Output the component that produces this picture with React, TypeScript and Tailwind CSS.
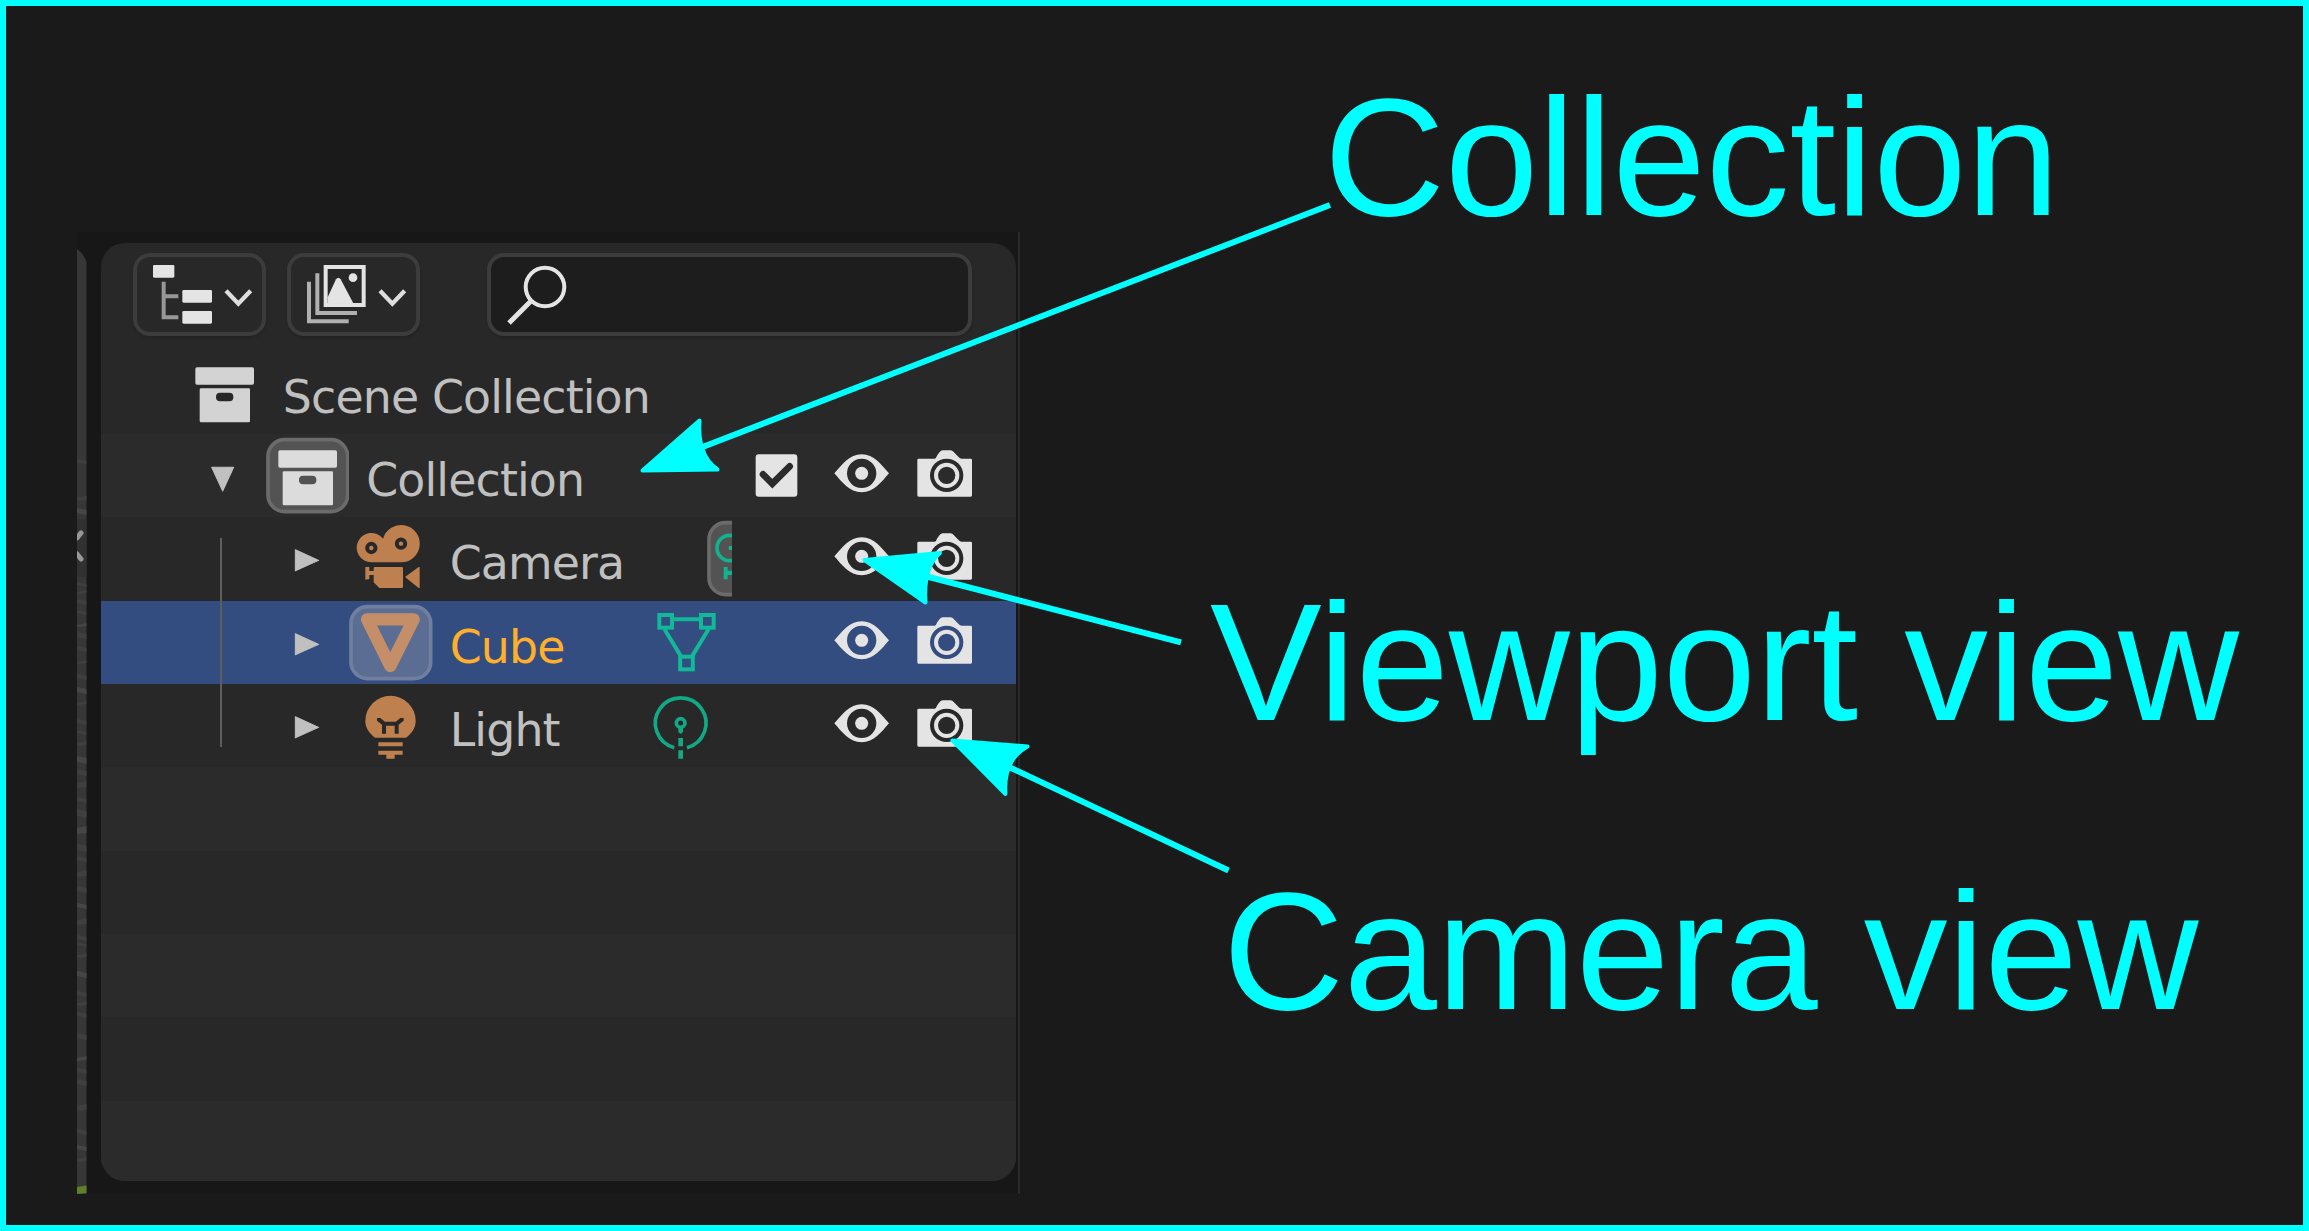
import React from "react";

const LIGHT = "#e4e4e4";
const ORANGE = "#bd804e";

function Cell({ children }: { children?: React.ReactNode }) {
  return (
    <svg viewBox="0 0 250 250" className="h-[83.35px] w-[83.35px] shrink-0">
      {children}
    </svg>
  );
}

function Pill({ fill = "#535353", stroke = "#6b6b6b" }) {
  return <rect x="6" y="17" width="239" height="216" rx="50" fill={fill} stroke={stroke} strokeWidth="11" />;
}

function BoxIcon({ hole = "#282828", fill = "#d3d3d3" }) {
  return (
    <>
      <rect x="37" y="49" width="176" height="52" rx="5" fill={fill} />
      <rect x="50" y="112" width="151" height="102" rx="4" fill={fill} />
      <rect x="99" y="125" width="52" height="26" rx="12" fill={hole} />
    </>
  );
}

function ArrowDown() {
  return <path d="M86 100H152L119 171Z" fill="#c0c0c0" stroke="#c0c0c0" strokeWidth="3" strokeLinejoin="round" />;
}

function ArrowRight() {
  return <path d="M88 98V161L158 130Z" fill="#c0c0c0" stroke="#c0c0c0" strokeWidth="3" strokeLinejoin="round" />;
}

function CheckIcon() {
  return (
    <Cell>
      <rect x="56" y="61" width="125" height="127" rx="9" fill={LIGHT} />
      <path d="M78 121L106 149L158 97" fill="none" stroke="#2b2b2b" strokeWidth="20" strokeLinecap="round" />
    </Cell>
  );
}

function EyeIcon() {
  return (
    <Cell>
      <path
        fillRule="evenodd"
        fill={LIGHT}
        d="M43 118C66 92 88 61 125 61S184 92 207 118C184 144 162 175 125 175S66 144 43 118ZM125 74a44 44 0 1 0 0 88a44 44 0 1 0 0-88Z"
      />
      <circle cx="125" cy="118" r="19.5" fill={LIGHT} />
    </Cell>
  );
}

function PhotoIcon() {
  return (
    <Cell>
      <path
        fillRule="evenodd"
        fill={LIGHT}
        d="M47 74H94Q97 74 99 71Q103 62 110 54Q114 49 119 49H143Q148 49 152 54L169 71Q173 74 177 74H203Q207 74 207 78V184Q207 188 203 188H47Q43 188 43 184V78Q43 74 47 74ZM131 74a50 50 0 1 0 0 100a50 50 0 1 0 0-100Z"
      />
      <circle cx="131" cy="124" r="32" fill="none" stroke={LIGHT} strokeWidth="12" />
    </Cell>
  );
}

function MovieCameraIcon() {
  return (
    <>
      <path fill={ORANGE} d="M67 136a44 44 0 1 1 34-72l1 2a56 56 0 1 1 54 70Z" />
      <circle cx="67" cy="93" r="12.5" fill="none" stroke="#282828" strokeWidth="12" />
      <circle cx="156" cy="80" r="12.5" fill="none" stroke="#282828" strokeWidth="12" />
      <path
        fill={ORANGE}
        d="M49 150H61V162H74V154Q74 150 78 150H158Q162 150 162 154V209Q162 213 158 213H91L74 196V174H61V186L49 188ZM168 180L209 150H212V213H209Z"
      />
    </>
  );
}

function MeshObjectIcon() {
  return <path d="M54 55H194L124 195Z" fill="none" stroke="#c48e68" strokeWidth="37" strokeLinejoin="round" />;
}

function BulbIcon() {
  return (
    <>
      <path fill={ORANGE} d="M78 161C60 147 49 132 49 111a75.500 75.500 0 0 1 151 0C200 132 189 147 171 161Z" />
      <path d="M90 102V107L105 119H143L158 107V102M105 119V149M143 119V149" fill="none" stroke="#282828" strokeWidth="12" />
      <path fill={ORANGE} d="M88 175H161V187H88ZM88 200H161V212H137V224H112V212H88Z" />
    </>
  );
}

function Label({ children, className = "" }: { children: React.ReactNode; className?: string }) {
  return (
    <div
      className={
        "shrink-0 whitespace-nowrap pl-[17px] pt-[12px] font-['DejaVu_Sans'] text-[45.800px] leading-[68px] tracking-[-0.85px] " +
        className
      }
    >
      {children}
    </div>
  );
}

function Toggles({ check = false }) {
  return (
    <div className="ml-auto flex pr-[29.300px]">
      {check && <CheckIcon />}
      <EyeIcon />
      <PhotoIcon />
    </div>
  );
}

const row = "flex h-[83.35px] shrink-0 ";

function HeaderButton({ children }: { children: React.ReactNode }) {
  return (
    <div className="flex h-[83.500px] w-[133px] rounded-[17px] border-4 border-[#3c3c3c] bg-[#282828] shadow-[0_2px_2px_#232323]">
      {children}
    </div>
  );
}

function Chevron() {
  return (
    <svg viewBox="490 205 86 60" className="ml-[12px] mt-[31px] h-[20px] w-[28.700px]">
      <path d="M496 213L533 252L570 213" fill="none" stroke="#dedede" strokeWidth="13" />
    </svg>
  );
}

/* Sliver of the neighbouring 3D viewport: faint grid streaks and the sidebar handle. */
const STREAKS = [
  [210, 3], [247, 4], [259, 5], [333, 3], [341, 3], [350, 4], [361, 3], [374, 3], [383, 5], [397, 4], [411, 3],
  [425, 4], [438, 5], [452, 3], [470, 4], [481, 3], [492, 4], [507, 6], [520, 5], [532, 6], [548, 4], [560, 7],
  [577, 7], [595, 6], [607, 4], [621, 6], [637, 5], [654, 4], [669, 6], [686, 4], [693, 3], [704, 4], [722, 5],
  [742, 4], [752, 4], [763, 4], [784, 5], [807, 4], [819, 4], [830, 5], [855, 6], [880, 4], [896, 4], [908, 4],
];

function ViewportSliver() {
  return (
    <svg viewBox="0 0 10 945" className="mt-[17px] h-[945px] w-[10px] shrink-0">
      <path d="M0 0Q7 5 9.500 13V945H0Z" fill="#373737" />
      <path d="M0 270H9.500V328H0Z" fill="#313131" />
      {STREAKS.map(([y, h], i) => (
        <path
          key={y}
          d={i % 3 === 1 ? `M0 ${y + 2}L9.500 ${y}v${h}L0 ${y + h + 1}Z` : `M0 ${y}L9.500 ${y + 2}v${h}L0 ${y + h}Z`}
          fill={i % 5 === 2 ? "#464646" : "#3f3f3f"}
        />
      ))}
      <path d="M0 289L4 284M0 305L4 310" stroke="#989898" strokeWidth="5" strokeLinecap="round" />
      <path d="M0 938L9.500 936.500V944L0 945Z" fill="#5d8029" />
    </svg>
  );
}

function Outliner() {
  return (
    <div className="relative ml-[14px] mt-[11px] flex h-[938px] w-[915px] flex-col overflow-hidden rounded-[24px] bg-[#282828]">
      <div className="flex h-[107.500px] shrink-0 pl-[32px] pt-[9.500px]">
        <HeaderButton>
          <svg viewBox="279 135 177 176" className="ml-[16px] mt-[8.500px] h-[58.700px] w-[59px]">
            <path d="M311 185V292H355M311 229H355" fill="none" stroke="#989898" strokeWidth="12" />
            <rect x="279" y="135" width="64" height="38" rx="4" fill={LIGHT} />
            <rect x="367" y="210" width="89" height="38" rx="4" fill={LIGHT} />
            <rect x="367" y="273" width="89" height="38" rx="4" fill={LIGHT} />
          </svg>
          <Chevron />
        </HeaderButton>
        <div className="ml-[21px]">
          <HeaderButton>
            <svg viewBox="742 135 177 176" className="ml-[16px] mt-[8.500px] h-[58.700px] w-[59px]">
              <path d="M748 185V304H867M773 160V279H892" fill="none" stroke="#b0b0b0" strokeWidth="12" />
              <rect x="798" y="141" width="114" height="114" fill="none" stroke={LIGHT} strokeWidth="12" />
              <path d="M804 232L829 178Q836 168 843 178L881 250H804Z" fill={LIGHT} />
              <circle cx="880" cy="173" r="13" fill={LIGHT} />
            </svg>
            <Chevron />
          </HeaderButton>
        </div>
        <div className="ml-[67px] flex h-[83.500px] w-[485px] rounded-[17px] border-4 border-[#3c3c3c] bg-[#1d1d1d] shadow-[0_2px_2px_#232323]">
          <svg viewBox="507 264 60 60" className="ml-[16px] mt-[8px] h-[60px] w-[60px]">
            <circle cx="545" cy="286" r="19.300" fill="none" stroke={LIGHT} strokeWidth="4" />
            <path d="M531 300L509 322" stroke={LIGHT} strokeWidth="5" />
          </svg>
        </div>
      </div>

      <div className={row + "pl-[81.500px]"}>
        <Cell>
          <BoxIcon />
        </Cell>
        <Label className="text-[#c0c0c0]">Scene Collection</Label>
      </div>

      <div className={row + "bg-[#2b2b2b] pl-[81.500px]"}>
        <Cell>
          <ArrowDown />
        </Cell>
        <Cell>
          <Pill />
          <BoxIcon hole="#535353" fill="#dcdcdc" />
        </Cell>
        <Label className="text-[#c0c0c0]">Collection</Label>
        <Toggles check />
      </div>

      <div className={row + "pl-[165px]"}>
        <Cell>
          <ArrowRight />
        </Cell>
        <Cell>
          <MovieCameraIcon />
        </Cell>
        <Label className="w-[274.500px] text-[#c0c0c0]">Camera</Label>
        <div className="w-[25.300px] overflow-hidden">
          <Cell>
            <Pill />
            <circle cx="68" cy="93" r="38" fill="none" stroke="#12b48f" strokeWidth="11" />
            <rect x="65" y="87" width="14" height="12" rx="3" fill="#12b48f" />
            <path d="M50 150H62V161H90V174H62V187H50Z" fill="#12b48f" />
          </Cell>
        </div>
        <Toggles />
      </div>

      <div className={row + "bg-[#334d80] pl-[165px]"}>
        <Cell>
          <ArrowRight />
        </Cell>
        <Cell>
          <Pill fill="#5b6d92" stroke="#707f9f" />
          <MeshObjectIcon />
        </Cell>
        <Label className="w-[212.200px] text-[#ffaf29]">Cube</Label>
        <Cell>
          <g fill="none" stroke="#12b898" strokeWidth="12">
            <rect x="43" y="42" width="38" height="38" />
            <rect x="168" y="42" width="38" height="38" />
            <rect x="105.500" y="167" width="38" height="38" />
            <path d="M87 55H162M58 84L108 166M191 84L141 166" />
          </g>
        </Cell>
        <Toggles />
      </div>

      <div className={row + "pl-[165px]"}>
        <Cell>
          <ArrowRight />
        </Cell>
        <Cell>
          <BulbIcon />
        </Cell>
        <Label className="w-[206.300px] text-[#c0c0c0]">Light</Label>
        <Cell>
          <g fill="none" stroke="#12a985" strokeWidth="11">
            <path d="M106 191A76 76 0 1 1 144 191" />
            <circle cx="125" cy="117" r="13" />
          </g>
          <path d="M118 130H132V144L125 150L118 144ZM118 162H132V187H118ZM118 199H132V224H118Z" fill="#12a985" />
        </Cell>
        <Toggles />
      </div>

      <div className={row + "bg-[#2b2b2b]"} />
      <div className={row} />
      <div className={row + "bg-[#2b2b2b]"} />
      <div className={row} />
      <div className={row + "bg-[#2b2b2b]"} />
      <div className="absolute left-[118.500px] top-[294.500px] h-[209px] w-[2.500px] bg-[#5e5e5e]" />
    </div>
  );
}

function Callouts() {
  const text = "whitespace-nowrap font-['Liberation_Sans'] text-[167.500px] leading-[168px] text-[#00ffff]";
  return (
    <div className="flex flex-col">
      <div className={text + " mt-[67px] ml-[304px]"}>Collection</div>
      <div className={text + " mt-[337px] ml-[190px] tracking-[-0.1px]"}>Viewport view</div>
      <div className={text + " mt-[121px] ml-[203px] tracking-[-0.2px]"}>Camera view</div>
    </div>
  );
}

function Arrows() {
  return (
    <svg viewBox="0 0 2309 1231" className="pointer-events-none absolute -left-1.5 -top-1.5 h-[1231px] w-[2309px]">
      <g stroke="#00ffff" fill="none" strokeWidth="6">
        <path d="M700 448L1330 205" />
        <path d="M925 576L1181 642.300" />
        <path d="M1009 767L1228.500 870.500" />
      </g>
      <g fill="#00ffff" stroke="#00ffff" strokeWidth="4" strokeLinejoin="round">
        <path d="M642.500 470.500L699.500 420.500Q697 455 717.500 469.500Z" />
        <path d="M864.500 560L940 553Q923 567 925.500 602.500Z" />
        <path d="M952.500 740.500L1027.500 746.500Q1003 760 1005.500 794Z" />
      </g>
    </svg>
  );
}

export default function App() {
  return (
    <div className="relative flex h-[1231px] w-[2309px] overflow-hidden border-6 border-[#00ffff] bg-[#1a1a1a]">
      <div className="ml-[71px] mt-[226px] flex h-[962px] w-[943px] shrink-0 border-r-2 border-[#2b2b2b] bg-[#171717]">
        <ViewportSliver />
        <Outliner />
      </div>
      <Callouts />
      <Arrows />
    </div>
  );
}
